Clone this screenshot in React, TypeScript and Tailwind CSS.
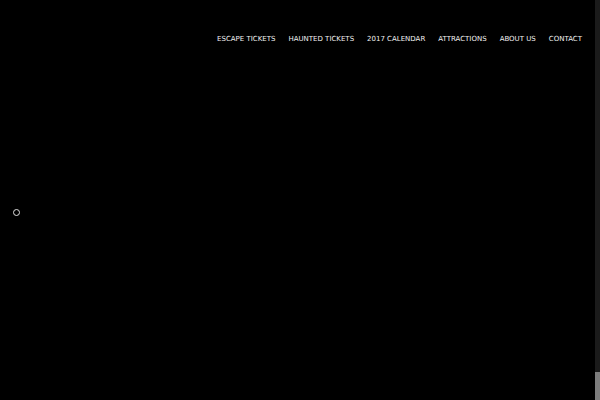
import React from "react";

const items = ["ESCAPE TICKETS", "HAUNTED TICKETS", "2017 CALENDAR", "ATTRACTIONS", "ABOUT US", "CONTACT"];

export default function App() {
  return (
    <div className="flex h-[400px] w-[600px] bg-black" style={{ fontFamily: '"DejaVu Sans", sans-serif' }}>
      <div className="flex flex-1 flex-col">
        <nav className="flex justify-end gap-[13px] pr-[13px] pt-[34px]">
          {items.map((t) => (
            <a key={t} className="text-[7px] leading-[11px] text-[#f2f2f2]">
              {t}
            </a>
          ))}
        </nav>
        <div className="flex flex-1 items-center pl-[13px] pb-[20px]">
          <div className="h-[7px] w-[7px] rounded-full border border-[#e0e0e0]" />
        </div>
      </div>
      <div className="flex w-[5px] flex-col bg-[#1b1b1b]">
        <div className="flex-1" />
        <div className="h-[28px] bg-[#7d7d7d]" />
      </div>
    </div>
  );
}
